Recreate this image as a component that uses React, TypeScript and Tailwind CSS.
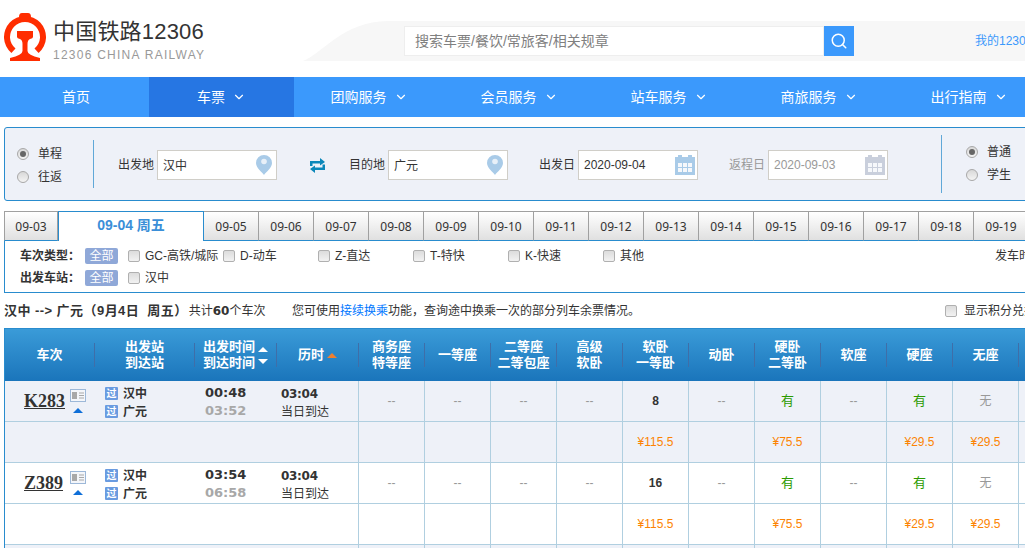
import type { ReactNode } from "react";
import { ChevronDown, Search } from "lucide-react";

const navItems = ["团购服务", "会员服务", "站车服务", "商旅服务", "出行指南"];
const dates = ["09-05", "09-06", "09-07", "09-08", "09-09", "09-10", "09-11", "09-12", "09-13", "09-14", "09-15", "09-16", "09-17", "09-18", "09-19"];
const seatHeads = [["商务座", "特等座"], ["一等座"], ["二等座", "二等包座"], ["高级", "软卧"], ["软卧", "一等卧"], ["动卧"], ["硬卧", "二等卧"], ["软座"], ["硬座"], ["无座"], [""]];
const trainTypes = ["GC-高铁/城际", "D-动车", "Z-直达", "T-特快", "K-快速", "其他"];

const prices = ["", "", "", "", "¥115.5", "", "¥75.5", "", "¥29.5", "¥29.5", ""];

function Logo() {
  return (
    <svg width="42" height="48" viewBox="0 0 42 48" className="shrink-0">
      <path d="M15 4 Q15 0 18 0 H24 Q27 0 27 4 Z" fill="#ff2d00" />
      <path d="M7.4 40 A21 21 0 1 1 34.6 40 L30.5 35.6 A15 15 0 1 0 11.5 35.6 Z" fill="#ff2d00" />
      <path d="M13 18 H29 V24 Q29 25.5 26 26 Q23.5 27 23.5 31 V38 Q23.5 42 36 45 V48 H6 V45 Q18.5 42 18.5 38 V31 Q18.5 27 16 26 Q13 25.5 13 24 Z" fill="#ff2d00" />
    </svg>
  );
}

function Pin() {
  return (
    <svg width="16" height="20" viewBox="0 0 16 20" className="shrink-0">
      <path d="M8 0 A8 8 0 0 1 16 8 C16 13 10 17 8 20 C6 17 0 13 0 8 A8 8 0 0 1 8 0 Z" fill="#a9cbe8" />
      <circle cx="8" cy="6.5" r="2.8" fill="#e8f0f8" />
    </svg>
  );
}

function CalendarIcon({ color }: { color: string }) {
  return (
    <svg width="20" height="20" viewBox="0 0 20 20" className="shrink-0">
      <rect x="0" y="2" width="20" height="18" fill={color} />
      <rect x="3" y="0" width="4" height="4" fill={color} />
      <rect x="13" y="0" width="4" height="4" fill={color} />
      {[3, 8, 13].map((x) =>
        [8, 13].map((y) => <rect key={`${x}-${y}`} x={x} y={y} width="4" height="4" fill="#f6f8fb" />)
      )}
    </svg>
  );
}

function SwapIcon() {
  return (
    <svg width="17" height="15" viewBox="0 0 17 15" className="shrink-0">
      <path d="M1 8 V3 H11 V0 L16 4 L11 7.5 V5.5 H3.5 V8 Z" fill="#0b87b9" />
      <path d="M16 6.5 V12 H6 V15 L1 11 L6 7.5 V9.5 H13.5 V6.5 Z" fill="#0b87b9" />
    </svg>
  );
}

function Radio({ checked }: { checked?: boolean }) {
  return (
    <span className="flex h-[12px] w-[12px] shrink-0 items-center justify-center rounded-full border border-[#a8a8a8] bg-gradient-to-b from-[#d8d8d8] to-[#f4f4f4]">
      {checked && <span className="h-[6px] w-[6px] rounded-full bg-[#666]" />}
    </span>
  );
}

function Checkbox() {
  return <span className="h-[12px] w-[12px] shrink-0 rounded-[2px] border border-[#b0b0b0] bg-gradient-to-b from-[#dcdcdc] to-[#f2f2f2]" />;
}

function DateField({ label, value, muted }: { label: string; value: string; muted?: boolean }) {
  return (
    <div className="flex items-center">
      <span className={`w-[39px] ${muted ? "text-[#999]" : "text-[#333]"}`}>{label}</span>
      <div className={`flex h-[30px] w-[120px] items-center justify-between border border-[#d0cec8] bg-white pl-[5px] pr-[2px] ${muted ? "text-[#999]" : "text-[#333]"}`}>
        <span>{value}</span>
        <CalendarIcon color={muted ? "#c9cfdc" : "#a9cbe8"} />
      </div>
    </div>
  );
}

function PlaceField({ label, value }: { label: string; value: string }) {
  return (
    <div className="flex items-center">
      <span className="w-[39px] text-[#333]">{label}</span>
      <div className="flex h-[30px] w-[120px] items-center justify-between border border-[#d0cec8] bg-white pl-[5px] pr-[4px] text-[#333]">
        <span className="mt-[2px]">{value}</span>
        <Pin />
      </div>
    </div>
  );
}

function PassBadge() {
  return (
    <span className="flex h-[13px] w-[13px] shrink-0 items-center justify-center rounded-[1px] bg-[#6a9be0] text-[10px] leading-none text-white">过</span>
  );
}

function TrainRows({ code, from, to, start, arrive, soft, striped }: { code: string; from: string; to: string; start: string; arrive: string; soft: string; striped?: boolean }) {
  const seats = ["--", "--", "--", "--", soft, "--", "有", "--", "有", "无", ""];
  const bg = striped ? "bg-[#eef1f8]" : "bg-white";
  return (
    <>
      <div className={`flex h-[41px] border-b border-[#b0cfe0] ${bg}`}>
        <div className="flex w-[90px] shrink-0 items-center pl-[19px]">
          <span className="w-[46px] font-[family-name:'Liberation_Serif',serif] text-[18px] font-bold text-[#333] underline">{code}</span>
          <div className="flex flex-col items-center">
            <svg width="16" height="13" viewBox="0 0 16 13">
              <rect x="0.5" y="0.5" width="15" height="12" fill="#f4f6fa" stroke="#9db8d8" />
              <rect x="2" y="3" width="5" height="7" fill="#a8a8a8" />
              <path d="M9 4 H14 M9 6.5 H14 M9 9 H14" stroke="#a8a8a8" />
            </svg>
            <span className="mt-[6px] h-0 w-0 border-x-[5px] border-b-[5px] border-x-transparent border-b-[#0f6fd8]" />
          </div>
        </div>
        <div className="flex w-[100px] shrink-0 flex-col justify-center gap-[5px] pl-[10px] pt-[3px] font-bold text-[#333]">
          <div className="flex h-[13px] items-center gap-[5px]"><PassBadge />{from}</div>
          <div className="flex h-[13px] items-center gap-[5px]"><PassBadge />{to}</div>
        </div>
        <div className="flex w-[82px] shrink-0 flex-col justify-center pl-[10px] pt-[2px] font-[family-name:'DejaVu_Sans',sans-serif] text-[13px] font-bold leading-[18px]">
          <span className="text-[#333]">{start}</span>
          <span className="text-[#a8a8a8]">{arrive}</span>
        </div>
        <div className="flex w-[81px] shrink-0 flex-col justify-center pl-[4px] pt-[3px] leading-[18px] text-[#333]">
          <span className="font-[family-name:'DejaVu_Sans',sans-serif] font-bold tracking-[-0.3px]">03:04</span>
          <span>当日到达</span>
        </div>
        {seats.map((seat, i) => (
          <div
            key={i}
            className={`flex w-[66px] shrink-0 items-center justify-center border-l border-[#b0cfe0] ${
              seat === "有" ? "text-[13px] text-[#2a9a00]" : seat === "无" || seat === "--" ? "text-[#999]" : "font-bold text-[#333]"
            }`}
          >
            {seat}
          </div>
        ))}
      </div>
      <div className={`flex h-[41px] border-b border-[#b0cfe0] ${bg}`}>
        <div className="w-[353px] shrink-0" />
        {prices.map((price, i) => (
          <div key={i} className="flex w-[66px] shrink-0 items-center justify-center border-l border-[#b0cfe0] text-[#fc8302]">
            {price}
          </div>
        ))}
      </div>
    </>
  );
}

function HeadCell({ width, lines, children }: { width: string; lines: string[]; children?: ReactNode }) {
  return (
    <div className={`flex ${width} h-[24px] shrink-0 items-center justify-center gap-[3px] border-r border-[#3f6ea8]`}>
      <div className="text-center leading-[16px]">
        {lines.map((line) => (
          <div key={line}>{line}</div>
        ))}
      </div>
      {children}
    </div>
  );
}

export default function App() {
  return (
    <div className="h-[548px] w-[1025px] overflow-hidden bg-white font-[family-name:'Liberation_Sans','Noto_Sans_CJK_SC',sans-serif] text-[12px] text-[#333]">
      {/* header */}
      <header className="flex h-[77px] items-start pl-[4px] pt-[13px]">
        <Logo />
        <div className="ml-[7px] flex w-[151px] flex-col pt-[1px]">
          <span className="whitespace-nowrap text-[22px] leading-[36px] tracking-[0.2px] text-[#333]">中国铁路12306</span>
          <span className="-mt-[2px] whitespace-nowrap text-[12px] leading-[14px] tracking-[1.25px] text-[#999]">12306 CHINA RAILWAY</span>
        </div>
        <div className="ml-[99px] mt-[8px] flex h-[40px] flex-1">
          {/* train nose curve on the left of the band */}
          <svg width="85" height="40" viewBox="0 0 85 40" className="shrink-0">
            <path d="M0 40 C18 34 40 0 85 0 V40 Z" fill="#f7f7f7" />
          </svg>
          <div className="flex flex-1 items-center bg-[#f7f7f7] pl-[16px]">
            <div className="flex h-[30px] w-[420px] shrink-0 items-center border border-[#eeeeee] bg-white pl-[10px] text-[14px] text-[#808080]">
              搜索车票/餐饮/常旅客/相关规章
            </div>
            <div className="flex h-[30px] w-[30px] shrink-0 items-center justify-center bg-[#3b99fc]">
              <Search size={18} color="white" strokeWidth={2} />
            </div>
            <span className="ml-[121px] whitespace-nowrap text-[#3b99fc]">我的12306</span>
          </div>
        </div>
      </header>

      {/* nav */}
      <nav className="flex h-[40px] bg-[#3b99fc] text-[14px] text-white">
        <div className="flex w-[149px] shrink-0 items-center justify-center pl-[3px]">首页</div>
        <div className="flex w-[145px] shrink-0 items-center justify-center gap-[7px] bg-[#2676e3]">
          车票
          <ChevronDown size={14} strokeWidth={2} />
        </div>
        {navItems.map((item) => (
          <div key={item} className="flex w-[150px] shrink-0 items-center justify-center gap-[7px]">
            {item}
            <ChevronDown size={14} strokeWidth={2} />
          </div>
        ))}
      </nav>

      {/* search form */}
      <section className="ml-[4px] mt-[10px] flex h-[74px] w-[1030px] items-center rounded-l-[3px] border border-[#298cce] bg-[#eef1f8]">
        <div className="flex h-[48px] w-[89px] shrink-0 flex-col justify-center gap-[5px] border-r border-[#60a8d8] pl-[12px] pt-[3px]">
          <label className="flex items-center gap-[9px]"><Radio checked />单程</label>
          <label className="flex items-center gap-[9px]"><Radio />往返</label>
        </div>
        <div className="ml-[24px] mt-[2px] flex items-center">
          <PlaceField label="出发地" value="汉中" />
          <div className="flex w-[72px] justify-center pl-[9px]"><SwapIcon /></div>
          <PlaceField label="目的地" value="广元" />
        </div>
        <div className="ml-[31px] mt-[2px]"><DateField label="出发日" value="2020-09-04" /></div>
        <div className="ml-[31px] mt-[2px]"><DateField label="返程日" value="2020-09-03" muted /></div>
        <div className="ml-[53px] flex h-[58px] flex-col justify-center gap-[5px] border-l border-[#60a8d8] pb-[2px] pl-[24px]">
          <label className="flex items-center gap-[9px]"><Radio checked />普通</label>
          <label className="flex items-center gap-[9px]"><Radio />学生</label>
        </div>
      </section>

      {/* date tabs */}
      <div className="ml-[4px] mt-[10px] flex h-[30px] w-[1030px]">
        <div className="flex h-[30px] w-[54px] shrink-0 items-center justify-center border border-[#a0a0a0] border-b-[#298cce] bg-gradient-to-b from-white to-[#e0e0e0] pt-[1px] font-[family-name:'Noto_Sans',sans-serif]">09-03</div>
        <div className="flex h-[30px] w-[146px] shrink-0 items-center justify-center border border-b-0 border-[#298cce] bg-white pb-[2px] text-[14px] font-bold text-[#3b8fd8]">09-04 周五</div>
        {dates.map((date) => (
          <div key={date} className="flex h-[30px] w-[55px] shrink-0 items-center justify-center border border-l-0 border-[#a0a0a0] border-b-[#298cce] bg-gradient-to-b from-white to-[#e0e0e0] pt-[1px] font-[family-name:'Noto_Sans',sans-serif]">
            {date}
          </div>
        ))}
      </div>

      {/* filters */}
      <section className="ml-[4px] flex h-[52px] w-[1030px] flex-col gap-[6px] border-b border-l border-[#298cce] pl-[15px] pt-[7px]">
        <div className="flex h-[16px] items-center">
          <span className="w-[65px] shrink-0 whitespace-nowrap font-bold">车次类型：</span>
          <span className="flex h-[16px] w-[33px] shrink-0 items-center justify-center rounded-[2px] bg-[#8fa8d8] text-white">全部</span>
          <div className="ml-[10px] flex">
            {trainTypes.map((type) => (
              <label key={type} className="flex w-[95px] items-center gap-[5px] whitespace-nowrap"><Checkbox />{type}</label>
            ))}
          </div>
          <span className="ml-[297px] whitespace-nowrap">发车时间</span>
        </div>
        <div className="flex h-[16px] items-center">
          <span className="w-[65px] shrink-0 whitespace-nowrap font-bold">出发车站：</span>
          <span className="flex h-[16px] w-[33px] shrink-0 items-center justify-center rounded-[2px] bg-[#8fa8d8] text-white">全部</span>
          <label className="ml-[10px] flex items-center gap-[5px]"><Checkbox />汉中</label>
        </div>
      </section>

      {/* summary */}
      <div className="ml-[4px] flex h-[35px] items-center whitespace-nowrap">
        <div className="flex w-[288px] shrink-0 items-center">
          <strong className="text-[13px] leading-[16px] tracking-[0.45px]">汉中 --&gt; 广元（9月4日&nbsp; 周五）</strong>
          <span className="ml-[1px]">共计<strong className="font-[family-name:'DejaVu_Sans',sans-serif]">60</strong>个车次</span>
        </div>
        <span className="w-[653px] shrink-0">
          您可使用<span className="text-[#0077ff]">接续换乘</span>功能，查询途中换乘一次的部分列车余票情况。
        </span>
        <label className="flex items-center gap-[7px]"><Checkbox />显示积分兑换</label>
      </div>

      {/* table */}
      <section className="ml-[4px] w-[1030px] border-l border-[#298cce]">
        <div className="flex h-[53px] items-center border-t border-[#298cce] bg-gradient-to-b from-[#3a9bd8] to-[#1a75bb] text-[13px] font-bold text-white">
          <HeadCell width="w-[90px]" lines={["车次"]} />
          <HeadCell width="w-[100px]" lines={["出发站", "到达站"]} />
          <HeadCell width="w-[82px]" lines={["出发时间", "到达时间"]}>
            <div className="flex flex-col gap-[7px]">
              <span className="h-0 w-0 border-x-[5px] border-b-[5px] border-x-transparent border-b-white" />
              <span className="h-0 w-0 border-x-[5px] border-t-[5px] border-x-transparent border-t-white" />
            </div>
          </HeadCell>
          <HeadCell width="w-[82px]" lines={["历时"]}>
            <span className="h-0 w-0 border-x-[5px] border-b-[5px] border-x-transparent border-b-[#f08030]" />
          </HeadCell>
          {seatHeads.map((lines, i) => (
            <HeadCell key={i} width="w-[66px]" lines={lines} />
          ))}
        </div>
        <TrainRows code="K283" from="汉中" to="广元" start="00:48" arrive="03:52" soft="8" striped />
        <TrainRows code="Z389" from="汉中" to="广元" start="03:54" arrive="06:58" soft="16" />
        <div className="flex h-[8px] bg-[#eef1f8]">
          <div className="w-[353px] shrink-0" />
          {prices.map((_, i) => (
            <div key={i} className="w-[66px] shrink-0 border-l border-[#b0cfe0]" />
          ))}
        </div>
      </section>
    </div>
  );
}
